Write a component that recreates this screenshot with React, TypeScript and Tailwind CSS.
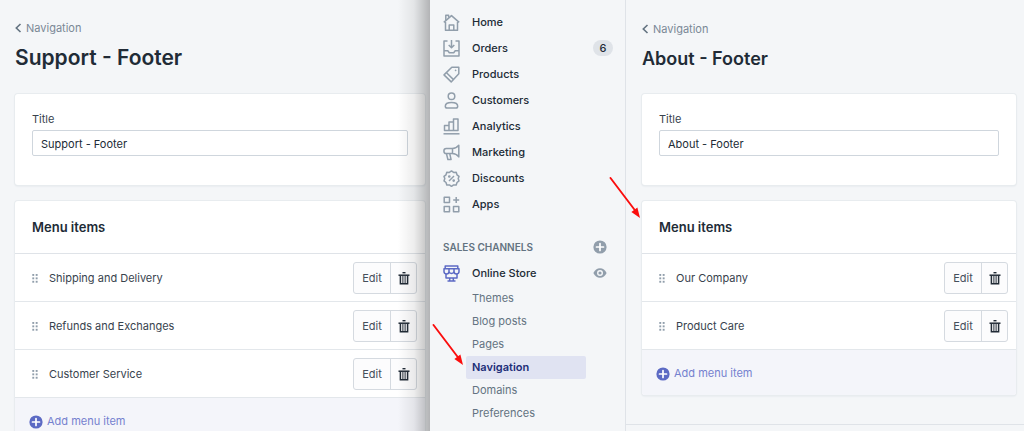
import { useState, type ReactNode } from "react";
import clsx from "clsx";

const mainLinks: { label: string; icon: ReactNode; badge?: number }[] = [
  {
    label: "Home",
    icon: (
      <>
        <path d="M2.5 8v8.3h12V8" />
        <path d="M.8 8.4 8.5 1.6l7.7 6.8" />
        <path d="M2.8 6V1.2h2.8v2.4" />
        <path d="M6.2 16v-5h4.6v5" />
      </>
    ),
  },
  {
    label: "Orders",
    badge: 6,
    icon: (
      <>
        <path d="M4.5 1H1v15h15V1h-3.5" />
        <path d="M1 10.8h3.8l1.5 2h4.4l1.5-2H16" />
        <path d="M8.5 0v7.5M5.7 5l2.8 2.8L11.3 5" />
      </>
    ),
  },
  {
    label: "Products",
    icon: (
      <>
        <path d="M8.8 1.2h7v6.6l-7.6 8.1-7.2-7z" />
        <path d="m3.5 6.8 7 6.8" />
        <circle cx="12.6" cy="4.4" r=".6" fill="currentColor" strokeWidth="0.5" />
      </>
    ),
  },
  {
    label: "Customers",
    icon: (
      <>
        <circle cx="8.5" cy="4.3" r="3.3" />
        <path d="M2.3 14.2c0-2.4 2.7-3.7 6.2-3.7s6.2 1.3 6.2 3.7c0 1.2-.7 1.8-1.8 1.8H4.1c-1.1 0-1.8-.6-1.8-1.8z" />
      </>
    ),
  },
  {
    label: "Analytics",
    icon: (
      <>
        <path d="M1.5 12.5v-5H6v5zM6 12.5V4h4.5v8.5zM10.5 12.5V1H15v11.5z" />
        <path d="M.5 15.8h16" />
      </>
    ),
  },
  {
    label: "Marketing",
    icon: (
      <>
        <path d="M9.5 4.5H3.3C1.9 4.5.9 5.6.9 7s1 2.6 2.4 2.6h6.2" />
        <path d="M9.5 4.5c2.7 0 4.7-1.2 6.3-3.2v11.6c-1.6-2-3.6-3.3-6.3-3.3z" />
        <path d="m3.5 9.8 1.4 5.8h3.2L6.8 9.8" />
      </>
    ),
  },
  {
    label: "Discounts",
    icon: (
      <>
        <path d="m8.5.9 2.1 1.5 2.6-.1.8 2.5 2 1.6-.8 2.2.8 2.3-2 1.6-.8 2.5-2.6-.1-2.1 1.5-2.1-1.5-2.6.1L3 12.5 1 10.900l.8-2.3L1 6.400l2-1.6.8-2.5 2.6.1z" />
        <path d="m6 11 5-5" />
        <circle cx="6.3" cy="6.5" r=".6" fill="currentColor" />
        <circle cx="10.7" cy="10.6" r=".6" fill="currentColor" />
      </>
    ),
  },
  {
    label: "Apps",
    icon: (
      <>
        <path d="M1.2 1.2h5.3v5.3H1.2zM1.2 10.5h5.3v5.3H1.2zM10.5 10.5h5.3v5.3h-5.3z" />
        <path d="M13.2 1v6M10.2 4h6" />
      </>
    ),
  },
];

const storeLinks = ["Themes", "Blog posts", "Pages", "Navigation", "Domains", "Preferences"];

function NavIcon({ children }: { children: ReactNode }) {
  return (
    <svg
      viewBox="0 0 17 17"
      className="size-[17px] shrink-0"
      fill="none"
      stroke="currentColor"
      strokeWidth="1.5"
      strokeLinejoin="round"
      aria-hidden="true"
    >
      {children}
    </svg>
  );
}

function PlusCircle() {
  return (
    <svg viewBox="0 0 14 14" className="size-[14px] shrink-0" aria-hidden="true">
      <circle cx="7" cy="7" r="6.6" fill="currentColor" />
      <path d="M7 3.5v7M3.5 7h7" stroke="#fff" strokeWidth="1.7" strokeLinecap="round" />
    </svg>
  );
}

function TrashIcon() {
  return (
    <svg viewBox="0 0 12 14" className="h-[14px] w-3" fill="none" stroke="#212b36" aria-hidden="true">
      <path d="M4.5 1.7h3" strokeWidth="1.4" />
      <path d="M.5 4.2h11" strokeWidth="1.5" />
      <path d="M2.4 4.5v8.3h7.2V4.5" strokeWidth="1.5" />
      <path d="M4.9 5v7M7.1 5v7" strokeWidth="1" />
    </svg>
  );
}

function DragHandle() {
  return (
    <svg viewBox="0 0 6 9" className="h-[9px] w-[6px]" fill="#919eab" aria-hidden="true">
      {[0, 3.4, 6.8].map((y) => (
        <g key={y}>
          <rect x="0.3" y={y} width="1.9" height="1.9" />
          <rect x="3.7" y={y} width="1.9" height="1.9" />
        </g>
      ))}
    </svg>
  );
}

function Arrow({ className }: { className: string }) {
  return (
    <svg
      viewBox="0 0 32 42"
      className={clsx("pointer-events-none absolute z-10 h-[42px] w-8", className)}
      aria-hidden="true"
    >
      <path d="M1.5 1l25 33" stroke="#fb0d0d" strokeWidth="1.9" strokeLinecap="round" />
      <path d="M31 41l-8.6-6 6-4.5z" fill="#fb0d0d" />
    </svg>
  );
}

function MenuItemRow({ label }: { label: string }) {
  return (
    <li className="flex h-12 items-center border-b border-[#e3e7eb] pt-px pr-2 pl-[17px]">
      <DragHandle />
      <span className="ml-[11px] flex-1 leading-4 text-[#38434e]">{label}</span>
      <div className="flex h-8 rounded-[3px] border border-[#d5dae0] bg-[#fcfcfd]">
        <button type="button" className="w-9 cursor-pointer text-[#454f5b]">
          Edit
        </button>
        <button
          type="button"
          aria-label={`Delete ${label}`}
          className="flex w-[26px] cursor-pointer items-center justify-center border-l border-[#d5dae0]"
        >
          <TrashIcon />
        </button>
      </div>
    </li>
  );
}

function MenuEditor({
  id,
  name,
  items,
  large,
  arrow,
}: {
  id: string;
  name: string;
  items: string[];
  large?: boolean;
  arrow?: boolean;
}) {
  const [title, setTitle] = useState(name);

  return (
    <>
      <header className={clsx("h-[94px]", large ? "pt-5" : "pt-[21px]")}>
        <a href="#navigation" className="flex w-fit items-center gap-1 leading-4 text-[#7a8896]">
          <svg viewBox="0 0 7 10" className="h-[10px] w-[7px]" fill="none" aria-hidden="true">
            <path d="M5.5 1 1.3 5l4.2 4" stroke="#637381" strokeWidth="1.6" />
          </svg>
          Navigation
        </a>
        <h1
          className={clsx(
            "mt-2 leading-7 font-semibold text-[#212b36]",
            large ? "text-[21px]" : "text-[18px]",
          )}
        >
          {name}
        </h1>
      </header>

      <section className="h-[91px] rounded-[3px] bg-white px-[17px] pt-4 shadow-[0_0_0_1px_#e8ecef,0_1px_2px_#d5dbe1]">
        <label htmlFor={id} className="block leading-[18px] text-[#38434e]">
          Title
        </label>
        <input
          id={id}
          type="text"
          value={title}
          onChange={(e) => setTitle(e.target.value)}
          className="mt-[2px] h-[26px] w-full rounded-[2px] border border-[#cfd6dd] bg-white px-2 pt-[2px] text-[#212b36]"
        />
      </section>

      <section className="relative mt-4 rounded-[3px] bg-white shadow-[0_0_0_1px_#e8ecef,0_1px_2px_#d5dbe1]">
        {arrow && <Arrow className="top-[-24px] left-[-33px]" />}
        <h2 className="flex h-[53px] items-center border-b border-[#dfe3e8] px-[17px] pt-[2px] text-[13px] font-semibold text-[#212b36]">
          Menu items
        </h2>
        <ul>
          {items.map((item) => (
            <MenuItemRow key={item} label={item} />
          ))}
        </ul>
        <div className="flex h-[45px] items-center rounded-b-[3px] bg-[#f4f5fa] px-[14px] pt-[2px]">
          <button type="button" className="flex cursor-pointer items-center gap-1 text-[#5c6ac4]">
            <PlusCircle />
            <span className="text-[#7581cf]">Add menu item</span>
          </button>
        </div>
      </section>
    </>
  );
}

function Sidebar() {
  return (
    <nav className="border-r border-[#dfe3e8] pt-[9px] pl-[13px] font-medium text-[#212b36]">
      <ul className="pr-3">
        {mainLinks.map(({ label, icon, badge }) => (
          <li key={label}>
            <a href={`#${label.toLowerCase()}`} className="flex h-[26px] items-center">
              <span className="text-[#919eab]">
                <NavIcon>{icon}</NavIcon>
              </span>
              <span className="ml-3 flex-1">{label}</span>
              {badge && <span className="w-5 rounded-full bg-[#dfe3e8] text-center leading-4">{badge}</span>}
            </a>
          </li>
        ))}
      </ul>

      <div className="mt-[17px] flex h-[26px] items-center justify-between pr-[18px] text-[#919eab]">
        <h2 className="text-[10px] font-semibold text-[#637381]">SALES CHANNELS</h2>
        <button type="button" aria-label="Add sales channel" className="cursor-pointer">
          <PlusCircle />
        </button>
      </div>

      <div className="flex h-[26px] items-center pr-[18px]">
        <a href="#online-store" className="flex flex-1 items-center gap-3">
          <span className="text-[#5c6ac4]">
            <NavIcon>
              <path d="M2.2 1h12.6v2.8H2.2zM1 3.8h15v2.4a2.4 2.4 0 0 1-5 .4 2.6 2.6 0 0 1-5 0 2.4 2.4 0 0 1-5-.4z" />
              <path d="M3 8.5V13h11V8.5M6.7 13v2.5M10.300 13v2.5M4.5 15.9h8M6 4v2.5M11 4v2.5" />
            </NavIcon>
          </span>
          Online Store
        </a>
        <button type="button" aria-label="View online store" className="cursor-pointer text-[#919eab]">
          <svg viewBox="0 0 14 12" className="h-3 w-[14px]" aria-hidden="true">
            <path d="M.4 6C1.8 2.9 4.1 1.2 7 1.2S12.2 2.9 13.6 6c-1.4 3.1-3.7 4.8-6.6 4.8S1.8 9.1.4 6z" fill="currentColor" />
            <circle cx="7" cy="6" r="2.3" fill="currentColor" stroke="#f4f6f8" strokeWidth="1.4" />
          </svg>
        </button>
      </div>

      <ul className="mt-px pr-[39px] pl-[23px]">
        {storeLinks.map((label) => {
          const active = label === "Navigation";
          return (
            <li key={label} className="relative">
              {active && <Arrow className="top-[-32px] left-[-34px]" />}
              <a
                href={`#${label.toLowerCase().replace(" ", "-")}`}
                aria-current={active ? "page" : undefined}
                className={clsx(
                  "flex h-[23px] items-center rounded-[2px] pl-[6px]",
                  active ? "bg-[#e0e3f2] font-semibold text-[#202e78]" : "font-normal text-[#637381]",
                )}
              >
                {label}
              </a>
            </li>
          );
        })}
      </ul>
    </nav>
  );
}

export default function App() {
  return (
    <div className="grid h-screen grid-cols-[430fr_196px_398fr] overflow-hidden bg-[#f4f6f8] font-['Inter','Liberation_Sans',sans-serif] text-[11px]">
      <main className="relative min-w-0 overflow-hidden pr-[5px] pl-[15px]">
        <MenuEditor
          id="support-title"
          name="Support - Footer"
          items={["Shipping and Delivery", "Refunds and Exchanges", "Customer Service"]}
          large
        />
        <div className="pointer-events-none absolute inset-y-0 right-0 w-8 bg-linear-to-r from-transparent via-black/7 to-black/27" />
      </main>

      <Sidebar />

      <main className="flex min-w-0 flex-col">
        <div className="h-[424px] pr-2 pl-4">
          <MenuEditor id="about-title" name="About - Footer" items={["Our Company", "Product Care"]} arrow />
        </div>
        <div className="border-t border-[#dfe3e8]" />
      </main>
    </div>
  );
}
